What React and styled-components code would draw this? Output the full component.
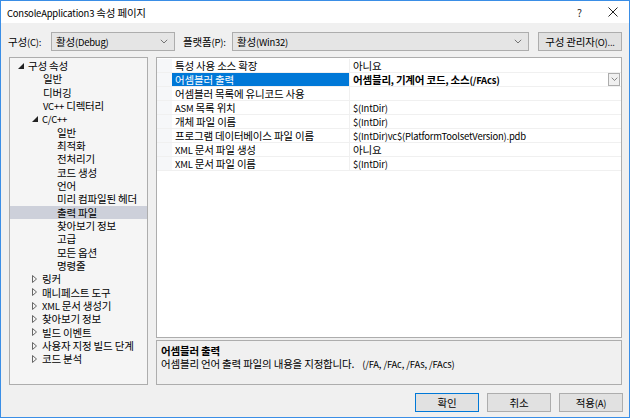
import React from "react";
import styled, { createGlobalStyle } from "styled-components";

const GlobalStyle = createGlobalStyle`
  body {
    margin: 0;
    font-family: "Noto Sans CJK KR", "Noto Sans", sans-serif;
    font-size: 10.5px;
    letter-spacing: -0.2px;
    color: #000;
  }
`;

// Latin runs are set a little smaller, as in the original dialog font
const Latin = styled.span`
  font-size: 0.9em;
`;

const T = ({ children }) => {
  const parts = String(children).split(/([A-Za-z0-9$().,/+:\-]+)/);
  return (
    <>
      {parts.map((p, i) =>
        i % 2 === 1 ? <Latin key={i}>{p}</Latin> : p
      )}
    </>
  );
};

const Window = styled.div`
  width: 630px;
  height: 418px;
  box-sizing: border-box;
  border: 1px solid #3a8ee6;
  background: #f0f0f0;
  display: flex;
  flex-direction: column;
`;

const TitleBar = styled.div`
  height: 22px;
  background: #fff;
  display: flex;
  align-items: center;
  padding-left: 6px;
  font-size: 10.5px;
  .title {
    flex: 1;
  }
  .btn {
    width: 33px;
    text-align: center;
    color: #222;
    display: flex;
    justify-content: center;
  }
`;

const ConfigRow = styled.div`
  display: flex;
  align-items: center;
  height: 19px;
  margin: 9px 0 0 7px;
`;

const Label = styled.span`
  width: ${(p) => p.w}px;
  white-space: nowrap;
`;

const Combo = styled.div`
  width: ${(p) => p.w}px;
  height: 19px;
  box-sizing: border-box;
  border: 1px solid #adadad;
  background: #e5e5e5;
  display: flex;
  align-items: center;
  padding: 0 6px 0 4px;
  margin-right: ${(p) => p.mr || 0}px;
  span.text {
    flex: 1;
  }
`;

const Button = styled.div`
  width: ${(p) => p.w}px;
  height: 19px;
  box-sizing: border-box;
  border: 1px solid ${(p) => (p.primary ? "#0078d7" : "#adadad")};
  background: #e1e1e1;
  display: flex;
  align-items: center;
  justify-content: center;
  white-space: nowrap;
`;

const Main = styled.div`
  display: flex;
  margin: 6px 0 0 8px;
  gap: 8px;
`;

const Tree = styled.div`
  width: 139px;
  height: 328px;
  box-sizing: border-box;
  border: 1px solid #adadad;
  background: #f5f5f5;
  padding-top: 1px;
`;

const TreeRow = styled.div`
  height: 13.33px;
  line-height: 13px;
  display: flex;
  align-items: center;
  padding-left: ${(p) => p.indent}px;
  background: ${(p) => (p.selected ? "#cdd0da" : "transparent")};
  white-space: nowrap;
  .arrow {
    width: 10px;
    display: flex;
    align-items: center;
  }
`;

const RightCol = styled.div`
  width: 466px;
  display: flex;
  flex-direction: column;
  gap: 2px;
`;

const Grid = styled.div`
  height: 281px;
  box-sizing: border-box;
  border: 1px solid #adadad;
  background: #fff;
  padding-top: 1px;
`;

const GridRow = styled.div`
  display: flex;
  height: 14px;
  line-height: 13px;
  box-sizing: border-box;
  border-bottom: 1px solid #f0f0f0;
  align-items: center;
  .gutter {
    width: 15px;
    height: 100%;
    background: #f6f7f9;
  }
  .name {
    width: 178px;
    height: 100%;
    padding-left: 3px;
    box-sizing: border-box;
    display: flex;
    align-items: center;
    background: ${(p) => (p.selected ? "#0078d7" : "transparent")};
    color: ${(p) => (p.selected ? "#fff" : "#000")};
    border-right: 1px solid #f0f0f0;
    white-space: pre;
  }
  .value {
    flex: 1;
    height: 100%;
    padding-left: 3px;
    display: flex;
    align-items: center;
    font-weight: ${(p) => (p.selected ? 700 : 400)};
    position: relative;
    white-space: pre;
  }
`;

const DropBtn = styled.div`
  position: absolute;
  right: 1px;
  top: 0;
  width: 12px;
  height: 13px;
  box-sizing: border-box;
  border: 1px solid #adadad;
  background: #f0f0f0;
  display: flex;
  align-items: center;
  justify-content: center;
`;

const Desc = styled.div`
  height: 45px;
  box-sizing: border-box;
  border: 1px solid #adadad;
  background: #f0f0f0;
  padding: 3px 0 0 4px;
  line-height: 13px;
  .head {
    font-weight: 700;
  }
  .flags {
    margin-left: 8px;
  }
`;

const Footer = styled.div`
  display: flex;
  justify-content: flex-end;
  gap: 8px;
  margin: 8px 6px 0 0;
`;

const Chevron = ({ size = 8 }) => (
  <svg width={size} height={size * 0.6} viewBox="0 0 10 6">
    <path d="M1 1 L5 5 L9 1" fill="none" stroke="#555" strokeWidth="1" />
  </svg>
);

const Expanded = () => (
  <svg width="6" height="6" viewBox="0 0 6 6">
    <polygon points="6,0 6,6 0,6" fill="#222" />
  </svg>
);

const Collapsed = () => (
  <svg width="5" height="8" viewBox="0 0 5 8">
    <polygon points="0.5,0.5 4.5,4 0.5,7.5" fill="none" stroke="#666" strokeWidth="1" />
  </svg>
);

const tree = [
  { label: "구성 속성", indent: 8, arrow: "open" },
  { label: "일반", indent: 33 },
  { label: "디버깅", indent: 33 },
  { label: "VC++ 디렉터리", indent: 33 },
  { label: "C/C++", indent: 22, arrow: "open" },
  { label: "일반", indent: 47 },
  { label: "최적화", indent: 47 },
  { label: "전처리기", indent: 47 },
  { label: "코드 생성", indent: 47 },
  { label: "언어", indent: 47 },
  { label: "미리 컴파일된 헤더", indent: 47 },
  { label: "출력 파일", indent: 47, selected: true },
  { label: "찾아보기 정보", indent: 47 },
  { label: "고급", indent: 47 },
  { label: "모든 옵션", indent: 47 },
  { label: "명령줄", indent: 47 },
  { label: "링커", indent: 22, arrow: "closed" },
  { label: "매니페스트 도구", indent: 22, arrow: "closed" },
  { label: "XML 문서 생성기", indent: 22, arrow: "closed" },
  { label: "찾아보기 정보", indent: 22, arrow: "closed" },
  { label: "빌드 이벤트", indent: 22, arrow: "closed" },
  { label: "사용자 지정 빌드 단계", indent: 22, arrow: "closed" },
  { label: "코드 분석", indent: 22, arrow: "closed" },
];

const props = [
  ["특성 사용 소스 확장", "아니요"],
  ["어셈블러 출력", "어셈블리, 기계어 코드, 소스(/FAcs)", true],
  ["어셈블러 목록에 유니코드 사용", ""],
  ["ASM 목록 위치", "$(IntDir)"],
  ["개체 파일 이름", "$(IntDir)"],
  ["프로그램 데이터베이스 파일 이름", "$(IntDir)vc$(PlatformToolsetVersion).pdb"],
  ["XML 문서 파일 생성", "아니요"],
  ["XML 문서 파일 이름", "$(IntDir)"],
];

export default function App() {
  return (
    <>
      <GlobalStyle />
      <Window>
        <TitleBar>
          <span className="title"><T>ConsoleApplication3 속성 페이지</T></span>
          <span className="btn">?</span>
          <span className="btn">
            <svg width="10" height="10" viewBox="0 0 10 10">
              <path d="M0.5 0.5 L9.5 9.5 M9.5 0.5 L0.5 9.5" stroke="#222" strokeWidth="1" />
            </svg>
          </span>
        </TitleBar>
        <ConfigRow>
          <Label w={43}><T>구성(C):</T></Label>
          <Combo w={124} mr={8}>
            <span className="text"><T>활성(Debug)</T></span>
            <Chevron />
          </Combo>
          <Label w={49}><T>플랫폼(P):</T></Label>
          <Combo w={297} mr={9}>
            <span className="text"><T>활성(Win32)</T></span>
            <Chevron />
          </Combo>
          <Button w={84}><T>구성 관리자(O)...</T></Button>
        </ConfigRow>
        <Main>
          <Tree>
            {tree.map((t, i) => (
              <TreeRow key={i} indent={t.indent} selected={t.selected}>
                {t.arrow && (
                  <span className="arrow">
                    {t.arrow === "open" ? <Expanded /> : <Collapsed />}
                  </span>
                )}
                <span><T>{t.label}</T></span>
              </TreeRow>
            ))}
          </Tree>
          <RightCol>
            <Grid>
              {props.map(([n, v, sel], i) => (
                <GridRow key={i} selected={sel}>
                  <div className="gutter" />
                  <div className="name"><span><T>{n}</T></span></div>
                  <div className="value">
                    <span><T>{v}</T></span>
                    {sel && (
                      <DropBtn>
                        <Chevron size={7} />
                      </DropBtn>
                    )}
                  </div>
                </GridRow>
              ))}
            </Grid>
            <Desc>
              <div className="head">어셈블러 출력</div>
              <div>
                어셈블리 언어 출력 파일의 내용을 지정합니다.
                <span className="flags"><T>(/FA, /FAc, /FAs, /FAcs)</T></span>
              </div>
            </Desc>
          </RightCol>
        </Main>
        <Footer>
          <Button w={64} primary>확인</Button>
          <Button w={64}>취소</Button>
          <Button w={64}><T>적용(A)</T></Button>
        </Footer>
      </Window>
    </>
  );
}
